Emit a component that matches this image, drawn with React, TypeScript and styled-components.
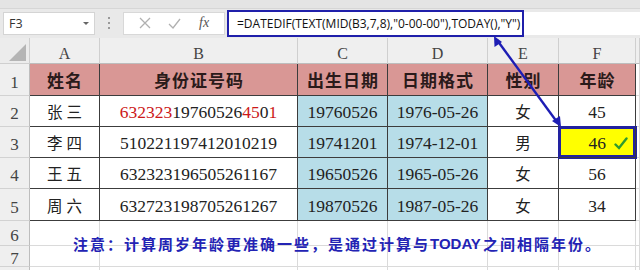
import React from "react";
import styled, { createGlobalStyle } from "styled-components";

const Global = createGlobalStyle`
  html, body { margin: 0; padding: 0; background: #ffffff; }
  body { width: 640px; height: 270px; overflow: hidden; }
  * { box-sizing: border-box; }
`;

const Page = styled.div`
  position: relative;
  width: 640px;
  height: 270px;
  overflow: hidden;
  background: #e9e9e9;
  display: flex;
  flex-direction: column;
`;

const TopStrip = styled.div`
  flex-shrink: 0;
  height: 9px;
  background: #e4e4e4;
  border-bottom: 1px solid #d6d6d6;
`;

const FormulaBar = styled.div`
  flex-shrink: 0;
  height: 28px;
  display: flex;
  align-items: center;
  padding: 0 0 0 3px;
`;

const NameBox = styled.div`
  width: 92px;
  height: 23px;
  background: #ffffff;
  border: 1px solid #d4d4d4;
  display: flex;
  align-items: center;
  justify-content: space-between;
  padding: 0 5px 0 5px;
  font-family: "Open Sans", "Liberation Sans", sans-serif;
  font-size: 12.5px;
  color: #333;
`;

const Caret = styled.span`
  width: 0;
  height: 0;
  border-left: 3px solid transparent;
  border-right: 3px solid transparent;
  border-top: 3px solid #666;
`;

const Dots = styled.div`
  width: 28px;
  display: flex;
  flex-direction: column;
  align-items: center;
  gap: 3px;
  span { width: 2px; height: 2px; background: #9a9a9a; }
`;

const FxGroup = styled.div`
  width: 102px;
  height: 23px;
  background: #ffffff;
  border: 1px solid #d8d8d8;
  display: flex;
  align-items: center;
  justify-content: space-around;
  padding: 0 6px;
`;

const Fx = styled.span`
  font-family: "Liberation Serif", serif;
  font-style: italic;
  font-size: 14px;
  color: #555;
`;

const FormulaInput = styled.div`
  flex: 1;
  margin-left: 2px;
  height: 23px;
  background: #ffffff;
  display: flex;
  align-items: center;
`;

const FormulaFrame = styled.div`
  width: 297px;
  height: 27px;
  border: 2px solid #1f1faa;
  background: #ffffff;
  display: flex;
  align-items: center;
  padding-left: 8px;
  font-family: "Open Sans", "Liberation Sans", sans-serif;
  font-size: 12px;
  color: #111;
  white-space: nowrap;
`;

const Sheet = styled.div`
  margin-top: 1px;
  display: grid;
  grid-template-columns: 30px 70px 198px 90px 100px 71px 77px 1fr;
  grid-template-rows: 26px 32px 31px 31px 31px 32px 25px 21px 1fr;
  background: #ffffff;
  flex: 1;
  min-height: 0;
  overflow: hidden;
`;

const Corner = styled.div`
  background: #ececec;
  border-right: 1px solid #cfcfcf;
  border-bottom: 1px solid #cfcfcf;
  display: flex;
  align-items: flex-end;
  justify-content: flex-end;
  padding: 0 3px 2px 0;
`;

const Triangle = styled.span`
  width: 0;
  height: 0;
  border-left: 17px solid transparent;
  border-bottom: 17px solid #b5b5b5;
`;

const ColHead = styled.div`
  background: #efefef;
  border-right: 1px solid #cfcfcf;
  border-bottom: 1px solid #bdbdbd;
  display: flex;
  align-items: center;
  justify-content: center;
  font-family: "Liberation Serif", serif;
  font-size: 16px;
  color: #444;
  padding-top: 6px;
`;

const RowHead = styled.div<{ $row?: number }>`
  grid-row: ${(p) => (p.$row ? `${p.$row} / span 1` : "auto")};
  grid-column: 1;
  background: #efefef;
  border-right: 1px solid #bdbdbd;
  border-bottom: 1px solid #d2d2d2;
  display: flex;
  align-items: center;
  justify-content: center;
  font-family: "Liberation Serif", serif;
  font-size: 17px;
  line-height: 1;
  color: #444;
  padding-top: 5px;
  overflow: hidden;
`;

type CellKind = "head" | "plain" | "blue" | "empty";

const Cell = styled.div<{ $kind: CellKind; $cjk?: boolean }>`
  display: flex;
  align-items: center;
  justify-content: center;
  border-right: 1px solid ${(p) => (p.$kind === "empty" ? "#dadada" : "#3c3c3c")};
  border-bottom: 1px solid ${(p) => (p.$kind === "empty" ? "#dadada" : "#3c3c3c")};
  background: ${(p) =>
    p.$kind === "head" ? "#d99795" : p.$kind === "blue" ? "#b7dde8" : "#ffffff"};
  font-family: ${(p) =>
    p.$cjk || p.$kind === "head"
      ? '"Noto Sans CJK SC", sans-serif'
      : '"Liberation Serif", "Noto Sans CJK SC", serif'};
  font-size: ${(p) => (p.$kind === "head" ? "17px" : p.$cjk ? "15.5px" : "17.5px")};
  font-weight: ${(p) => (p.$kind === "head" ? 700 : 400)};
  letter-spacing: ${(p) => (p.$kind === "head" ? "1px" : p.$cjk ? "4px" : "0")};
  color: ${(p) => (p.$kind === "head" ? "#2a1a1a" : "#222")};
  padding-top: ${(p) => (p.$cjk || p.$kind === "head" ? "0" : "3px")};
  padding-left: ${(p) => (p.$kind === "head" ? "1px" : p.$cjk ? "4px" : "0")};
  white-space: nowrap;
`;

const GridCell = styled.div<{ $row: number; $col: number }>`
  grid-row: ${(p) => p.$row};
  grid-column: ${(p) => p.$col};
  background: #ffffff;
  border-right: 1px solid #dadada;
  border-bottom: 1px solid #dadada;
`;

const Selected = styled(Cell)`
  position: relative;
  z-index: 2;
  background: #ffff00;
  box-shadow: inset 0 0 0 2px #2222a0, 0 0 0 1px #2222a0;
  justify-content: flex-end;
  gap: 8px;
  padding-right: 7px;
`;

const Red = styled.span`
  color: #cc1818;
`;

const Note = styled.div`
  grid-column: 2 / 9;
  grid-row: 7 / 9;
  z-index: 1;
  display: flex;
  align-items: center;
  padding-left: 43px;
  padding-bottom: 1px;
  font-family: "Noto Sans CJK SC", sans-serif;
  font-weight: 700;
  font-size: 15px;
  letter-spacing: 2px;
  color: #2323b4;
  white-space: nowrap;
  pointer-events: none;
`;

const Latin = styled.span`
  font-family: "Liberation Sans", sans-serif;
  font-weight: 700;
  letter-spacing: 0;
  margin-right: 2px;
`;

const ArrowLayer = styled.svg`
  position: absolute;
  left: 0;
  top: 0;
  z-index: 5;
  pointer-events: none;
`;

const cols = ["A", "B", "C", "D", "E", "F", ""];

const rows = [
  { n: "张三", id: null, b: "19760526", d: "1976-05-26", s: "女", age: "45" },
  { n: "李四", id: "510221197412010219", b: "19741201", d: "1974-12-01", s: "男", age: "46" },
  { n: "王五", id: "632323196505261167", b: "19650526", d: "1965-05-26", s: "女", age: "56" },
  { n: "周六", id: "632723198705261267", b: "19870526", d: "1987-05-26", s: "女", age: "34" },
];

export default function App() {
  return (
    <Page>
      <Global />
      <TopStrip />
      <FormulaBar>
        <NameBox>
          <span>F3</span>
          <Caret />
        </NameBox>
        <Dots>
          <span />
          <span />
          <span />
        </Dots>
        <FxGroup>
          <svg width="12" height="12" viewBox="0 0 12 12">
            <path d="M1 1 L11 11 M11 1 L1 11" stroke="#b0b0b0" strokeWidth="1.3" fill="none" />
          </svg>
          <svg width="13" height="11" viewBox="0 0 13 11">
            <path d="M1 6 L5 10 L12 1" stroke="#b0b0b0" strokeWidth="1.3" fill="none" />
          </svg>
          <Fx>fx</Fx>
        </FxGroup>
        <FormulaInput>
          <FormulaFrame>=DATEDIF(TEXT(MID(B3,7,8),"0-00-00"),TODAY(),"Y")</FormulaFrame>
        </FormulaInput>
      </FormulaBar>
      <Sheet>
        <Corner>
          <Triangle />
        </Corner>
        {cols.map((c, i) => (
          <ColHead key={i}>{c}</ColHead>
        ))}

        <RowHead>1</RowHead>
        <Cell $kind="head">姓名</Cell>
        <Cell $kind="head">身份证号码</Cell>
        <Cell $kind="head">出生日期</Cell>
        <Cell $kind="head">日期格式</Cell>
        <Cell $kind="head">性别</Cell>
        <Cell $kind="head">年龄</Cell>
        <Cell $kind="empty" />

        {rows.map((r, i) => (
          <React.Fragment key={r.n}>
            <RowHead>{i + 2}</RowHead>
            <Cell $kind="plain" $cjk>
              {r.n}
            </Cell>
            <Cell $kind="plain">
              {r.id ?? (
                <span>
                  <Red>632323</Red>19760526<Red>45</Red>0<Red>1</Red>
                </span>
              )}
            </Cell>
            <Cell $kind="blue">{r.b}</Cell>
            <Cell $kind="blue">{r.d}</Cell>
            <Cell $kind="plain" $cjk>
              {r.s}
            </Cell>
            {i === 1 ? (
              <Selected $kind="plain">
                <span>{r.age}</span>
                <svg width="14" height="13" viewBox="0 0 14 13">
                  <path d="M1.5 7.5 L5 11 L12.5 1.5" stroke="#2f9a2f" strokeWidth="2.4" fill="none" strokeLinecap="round" />
                </svg>
              </Selected>
            ) : (
              <Cell $kind="plain">{r.age}</Cell>
            )}
            <Cell $kind="empty" />
          </React.Fragment>
        ))}

        {[6, 7, 8].map((n) => (
          <React.Fragment key={n}>
            <RowHead $row={n + 1}>{n < 8 ? n : ""}</RowHead>
            {cols.map((_, i) => (
              <GridCell key={i} $row={n + 1} $col={i + 2} />
            ))}
          </React.Fragment>
        ))}
        <Note>
          注意：计算周岁年龄更准确一些，是通过计算与<Latin>TODAY</Latin>之间相隔年份。
        </Note>
      </Sheet>
      <ArrowLayer width="640" height="270" viewBox="0 0 640 270">
        <line x1="497" y1="40" x2="557" y2="122" stroke="#1d1db4" strokeWidth="2.4" />
        <polygon points="494,36 494.5,47 502,42" fill="#1d1db4" />
        <polygon points="561,127 552,121 560,116" fill="#1d1db4" />
      </ArrowLayer>
    </Page>
  );
}
